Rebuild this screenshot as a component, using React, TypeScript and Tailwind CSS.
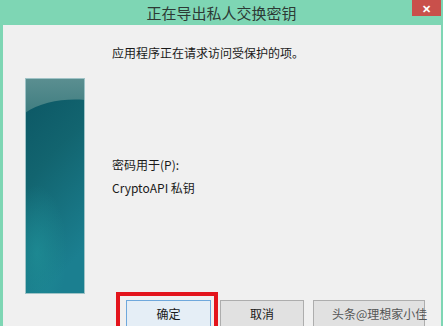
import React from "react";

const font = { fontFamily: '"Noto Sans CJK SC", "Noto Sans", sans-serif' };

function Panel() {
  return (
    <svg width="60" height="216" viewBox="0 0 60 216" className="block">
      <defs>
        <linearGradient id="g1" x1="0" y1="0" x2="0.3" y2="1">
          <stop offset="0" stopColor="#0b5563" />
          <stop offset="0.45" stopColor="#12646f" />
          <stop offset="1" stopColor="#1b7f90" />
        </linearGradient>
        <linearGradient id="g2" x1="0" y1="0" x2="0" y2="1">
          <stop offset="0" stopColor="#5b8f91" />
          <stop offset="1" stopColor="#3f7d80" />
        </linearGradient>
        <radialGradient id="g3" cx="0.2" cy="0.7" r="0.5">
          <stop offset="0" stopColor="#1f9097" stopOpacity="0.7" />
          <stop offset="1" stopColor="#1f9097" stopOpacity="0" />
        </radialGradient>
      </defs>
      <rect x="0" y="0" width="60" height="216" fill="url(#g1)" />
      <path d="M0 0 H60 V22 C40 20 15 24 0 35 Z" fill="url(#g2)" />
      <rect x="0" y="80" width="60" height="136" fill="url(#g3)" />
      <rect x="0.5" y="0.5" width="59" height="215" fill="none" stroke="#9fc3c6" />
    </svg>
  );
}

export default function App() {
  return (
    <div
      className="w-[443px] h-[326px] bg-[#7ed6b4] flex flex-col overflow-hidden text-[#1a1a1a]"
      style={font}
    >
      <div className="h-[25px] relative flex items-center justify-center shrink-0">
        <span className="text-[15px] text-[#2d3a35] leading-none">正在导出私人交换密钥</span>
        <div className="absolute right-[2px] top-0 w-[29px] h-[16px] bg-[#c9504b] flex items-center justify-center">
          <span className="text-white text-[11px] leading-none font-bold">✕</span>
        </div>
      </div>
      <div className="flex-1 ml-[3px] mr-[2px] bg-[#f0f0f0] flex">
        <div className="pl-[22px] pt-[53px] shrink-0">
          <Panel />
        </div>
        <div className="ml-[27px] flex flex-col flex-1">
          <div className="pt-[20px] text-[12px] leading-[16px]">应用程序正在请求访问受保护的项。</div>
          <div className="mt-[96px] text-[12px] leading-[16px]">密码用于(P):</div>
          <div className="mt-[7px] text-[12px] leading-[16px]">CryptoAPI 私钥</div>
          <div className="mt-[104px] ml-[14px] flex gap-[9px]">
            <div className="relative">
              <div className="w-[85px] h-[30px] border border-[#6fa8dc] bg-[#e5eef6] flex items-start justify-center pt-[4px] text-[12px]">
                确定
              </div>
              <div className="absolute left-[-10px] top-[-8px] w-[102px] h-[40px] border-[4px] border-[#e3141c]" />
            </div>
            <div className="w-[84px] h-[30px] border border-[#adadad] bg-[#e1e1e1] flex items-start justify-center pt-[4px] text-[12px]">
              取消
            </div>
            <div className="w-[112px] h-[30px] border border-[#adadad] bg-[#e1e1e1] flex items-start pl-[18px] pt-[4px] text-[12px] whitespace-nowrap text-[#555]">
              头条@理想家小佳
            </div>
          </div>
        </div>
      </div>
    </div>
  );
}
